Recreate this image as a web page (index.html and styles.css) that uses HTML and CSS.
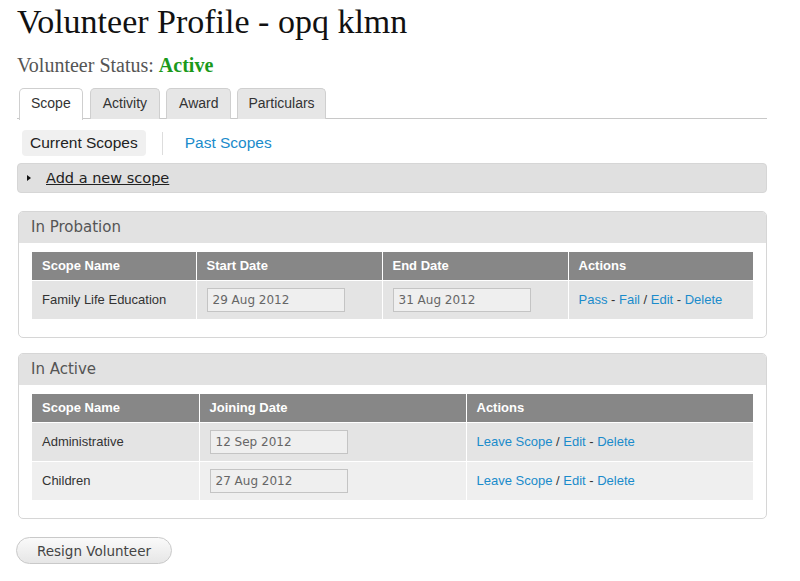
FILE: index.html
```html
<!DOCTYPE html>
<html lang="en">

<head>
    <meta charset="UTF-8">
    <title>Volunteer Profile</title>
    <link rel="stylesheet" href="styles.css">
</head>

<body>
    <div id="content">
        <h1 class="title">Volunteer Profile - opq klmn</h1>
        <p class="status">Volunteer Status: <b>Active</b></p>

        <ul class="tabs">
            <li class="tab active">Scope</li>
            <li class="tab">Activity</li>
            <li class="tab">Award</li>
            <li class="tab">Particulars</li>
        </ul>

        <div class="subtabs">
            <span class="subtab current">Current Scopes</span>
            <span class="divider"></span>
            <a class="subtab link" href="#">Past Scopes</a>
        </div>

        <div class="add-bar">
            <span class="arrow"></span>
            <a href="#">Add a new scope</a>
        </div>

        <div class="panel">
            <div class="panel-head">In Probation</div>
            <table class="grid probation">
                <tr>
                    <th class="c1">Scope Name</th>
                    <th class="c2">Start Date</th>
                    <th class="c3">End Date</th>
                    <th>Actions</th>
                </tr>
                <tr>
                    <td>Family Life Education</td>
                    <td><input type="text" value="29 Aug 2012" disabled></td>
                    <td><input type="text" value="31 Aug 2012" disabled></td>
                    <td class="actions"><a href="#">Pass</a> - <a href="#">Fail</a> / <a href="#">Edit</a> - <a href="#">Delete</a></td>
                </tr>
            </table>
        </div>

        <div class="panel">
            <div class="panel-head">In Active</div>
            <table class="grid active-list">
                <tr>
                    <th class="c1">Scope Name</th>
                    <th class="c2">Joining Date</th>
                    <th>Actions</th>
                </tr>
                <tr>
                    <td>Administrative</td>
                    <td><input type="text" value="12 Sep 2012" disabled></td>
                    <td class="actions"><a href="#">Leave Scope</a> / <a href="#">Edit</a> - <a href="#">Delete</a></td>
                </tr>
                <tr class="odd">
                    <td>Children</td>
                    <td><input type="text" value="27 Aug 2012" disabled></td>
                    <td class="actions"><a href="#">Leave Scope</a> / <a href="#">Edit</a> - <a href="#">Delete</a></td>
                </tr>
            </table>
        </div>

        <button class="resign">Resign Volunteer</button>
    </div>
</body>

</html>
```

FILE: styles.css
```css
* {
    padding: 0;
    margin: 0;
    box-sizing: border-box;
}

body {
    background: #fff;
    font-family: "Liberation Sans", Arial, sans-serif;
    color: #333;
}

#content {
    width: 750px;
    margin-left: 17px;
}

a {
    color: #1a8bcb;
    text-decoration: none;
}

.title {
    font-family: "Liberation Serif", "Times New Roman", serif;
    font-weight: normal;
    font-size: 34px;
    line-height: 40px;
    color: #111;
    padding-top: 2px;
}

.status {
    font-family: "Liberation Serif", "Times New Roman", serif;
    font-size: 20px;
    color: #555;
    margin-top: 12px;
    line-height: 22px;
}

.status b {
    color: #1b9a1b;
}

.tabs {
    list-style: none;
    display: flex;
    gap: 6px;
    margin-top: 12px;
    padding-left: 2px;
    border-bottom: 1px solid #c8c8c8;
    height: 31px;
}

.tab {
    height: 31px;
    padding: 0 12px;
    line-height: 28px;
    font-size: 14px;
    color: #333;
    background: #e6e6e6;
    border: 1px solid #cfcfcf;
    border-bottom: none;
    border-radius: 5px 5px 0 0;
}

.tab.active {
    background: #fff;
    height: 32px;
    padding: 0 11px;
    margin-right: 1px;
}

.tab:last-child {
    padding: 0 10px;
}

.subtabs {
    display: flex;
    align-items: center;
    margin-top: 11px;
    height: 26px;
    padding-left: 5px;
}

.subtab {
    font-size: 15.5px;
    line-height: 26px;
}

.subtab.current {
    background: #f0f0f0;
    border-radius: 4px;
    padding: 0 8px;
    color: #222;
}

.divider {
    width: 1px;
    height: 23px;
    background: #ddd;
    margin: 0 22px 0 16px;
}

.link {
    color: #1a8bcb;
}

.add-bar {
    margin-top: 7px;
    height: 30px;
    background: #e0e0e0;
    border: 1px solid #d6d6d6;
    border-radius: 4px;
    display: flex;
    align-items: center;
    padding-left: 9px;
}

.arrow {
    width: 0;
    height: 0;
    border-top: 3px solid transparent;
    border-bottom: 3px solid transparent;
    border-left: 4px solid #111;
    margin-right: 15px;
}

.add-bar a {
    font-family: "DejaVu Sans", Verdana, sans-serif;
    font-size: 14.5px;
    color: #222;
    text-decoration: underline;
}

.panel {
    margin-top: 18px;
    margin-left: 1px;
    width: 749px;
    border: 1px solid #d6d6d6;
    border-radius: 5px;
    padding-bottom: 18px;
    overflow: hidden;
}

.panel + .panel {
    margin-top: 15px;
}

.panel-head {
    background: #e2e2e2;
    height: 31px;
    line-height: 31px;
    padding-left: 12px;
    font-family: "DejaVu Sans", Verdana, sans-serif;
    font-size: 15px;
    color: #555;
    margin-bottom: 9px;
}

.grid {
    margin-left: 13px;
    width: 721px;
    border-collapse: collapse;
    font-size: 13px;
}

.grid th {
    background: #878787;
    color: #fff;
    text-align: left;
    height: 28px;
    padding-left: 10px;
    font-weight: bold;
    border-left: 1px solid #fff;
}

.grid td {
    background: #e4e4e4;
    color: #333;
    height: 39px;
    padding-left: 10px;
    border-left: 1px solid #fff;
    border-top: 1px solid #fff;
}

.grid th:first-child,
.grid td:first-child {
    border-left: none;
}

.grid tr.odd td {
    background: #efefef;
}

.probation .c1 { width: 164px; }
.probation .c2 { width: 186px; }
.probation .c3 { width: 186px; }

.active-list .c1 { width: 167px; }
.active-list .c2 { width: 267px; }

.grid input {
    width: 138px;
    height: 24px;
    border: 1px solid #c4c4c4;
    background: #efefef;
    font-family: "DejaVu Sans", Verdana, sans-serif;
    font-size: 12px;
    color: #666;
    padding-left: 5px;
}

.actions {
    color: #333;
}

.resign {
    margin-top: 18px;
    margin-left: -1px;
    width: 156px;
    height: 27px;
    border: 1px solid #c9c9c9;
    border-radius: 14px;
    background: linear-gradient(#fafafa, #e6e6e6);
    font-family: "DejaVu Sans", Verdana, sans-serif;
    font-size: 13.5px;
    color: #444;
}
```
